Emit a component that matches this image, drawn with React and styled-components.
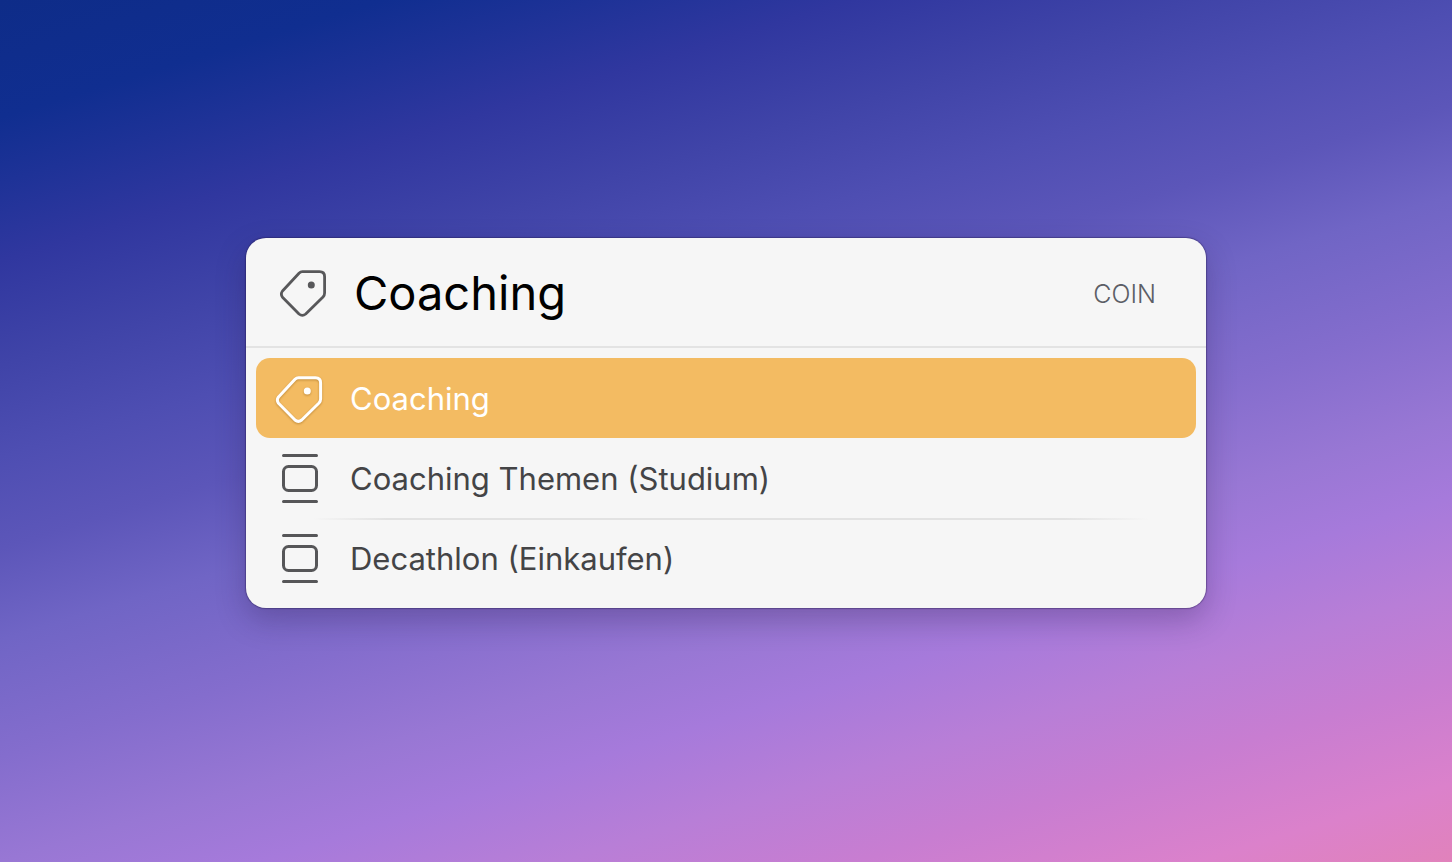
import React, { useState } from "react";
import styled, { createGlobalStyle } from "styled-components";

const GlobalStyle = createGlobalStyle`
  *, *::before, *::after { box-sizing: border-box; }
  body { margin: 0; font-family: Inter, "Liberation Sans", sans-serif; }
`;

const Desktop = styled.main`
  min-height: 100vh;
  display: flex;
  align-items: center;
  justify-content: center;
  padding: 24px 24px 40px;
  background:
    linear-gradient(
      163deg,
      #0e2c88 0%,
      #102e90 9%,
      #1e3297 14%,
      #30379f 20%,
      #4044a8 28%,
      #4e4eb2 35%,
      #5c56b9 42%,
      #7065c5 49%,
      #846dcd 58%,
      #9877d4 66%,
      #a67adb 72%,
      #b87ed7 79%,
      #c87dd1 86%,
      #db81cb 94%,
      #e182bb 100%
    );
`;

const Palette = styled.section`
  width: 100%;
  max-width: 960px;
  background: #f6f6f6;
  border-radius: 20px;
  box-shadow: 0 0 1px 1px rgba(30, 20, 70, 0.36), 0 12px 30px rgba(40, 20, 70, 0.28);
`;

const SearchBar = styled.label`
  display: flex;
  align-items: center;
  gap: 24px;
  height: 110px;
  padding: 0 50px 0 32px;
  border-bottom: 2px solid #e3e3e3;
  color: #58585a;
`;

const SearchInput = styled.input`
  flex: 1;
  min-width: 0;
  padding: 2px 0 0;
  border: 0;
  outline: 0;
  background: transparent;
  color: #000;
  font: 400 47px/64px Inter, "Liberation Sans", sans-serif;
`;

const Shortcut = styled.span`
  padding-top: 3px;
  color: #5c5e66;
  font-size: 25px;
  line-height: 32px;
  font-weight: 300;
`;

const Results = styled.ul`
  margin: 0;
  padding: 10px;
  list-style: none;
`;

const Result = styled.li`
  background: ${(p) =>
    p.$divided
      ? "linear-gradient(90deg, transparent 6%, #e2e2e2 14%, #e2e2e2 86%, transparent 95%) top / 100% 2px no-repeat"
      : "none"};
`;

const ResultButton = styled.button`
  display: flex;
  align-items: center;
  gap: 24px;
  width: 100%;
  height: 80px;
  padding: 0 18px;
  border: 0;
  border-radius: 14px;
  background: ${(p) => (p.$selected ? "#f3bb62" : "transparent")};
  color: ${(p) => (p.$selected ? "#fff" : "#444446")};
  font: 400 31px/40px Inter, "Liberation Sans", sans-serif;
  text-align: left;
  cursor: pointer;

  svg {
    color: ${(p) => (p.$selected ? "#fff" : "#565658")};
    filter: ${(p) => (p.$selected ? "drop-shadow(0 1px 1px rgba(120, 70, 0, 0.4))" : "none")};
  }
`;

const ResultLabel = styled.span`
  padding-top: 2px;
`;

const Icon = styled.svg`
  flex: none;
  display: block;
  width: 52px;
  height: 52px;
  fill: none;
  stroke: currentColor;
  stroke-linecap: round;
  stroke-linejoin: round;
`;

function TagIcon({ weight }) {
  return (
    <Icon viewBox="0 0 52 52" strokeWidth={weight} aria-hidden="true">
      <path d="M24.500 5.700H41.500Q46.600 5.700 46.600 10.700V27Q46.600 29.300 45 31L27.700 48Q24.300 50.700 21 48L4.500 31.300Q2.200 28 4.500 25L21 7.200Q22.500 5.700 24.500 5.700Z" />
      <circle cx="33.300" cy="19" r="3.500" fill="currentColor" stroke="none" />
    </Icon>
  );
}

function AreaIcon() {
  return (
    <Icon viewBox="0 0 52 52" strokeWidth="3" aria-hidden="true">
      <path d="M9.500 3.500h33M9.500 49.500h33" />
      <rect x="9.500" y="14.500" width="33" height="24" rx="5" />
    </Icon>
  );
}

const results = [
  { label: "Coaching", kind: "tag" },
  { label: "Coaching Themen (Studium)", kind: "area" },
  { label: "Decathlon (Einkaufen)", kind: "area" },
];

export default function App() {
  const [query, setQuery] = useState("Coaching");
  const [selected, setSelected] = useState(0);

  return (
    <>
      <GlobalStyle />
      <Desktop>
        <Palette>
          <SearchBar>
            <TagIcon weight={2.8} />
            <SearchInput
              type="text"
              aria-label="Tag"
              spellCheck={false}
              value={query}
              onChange={(e) => setQuery(e.target.value)}
            />
            <Shortcut>COIN</Shortcut>
          </SearchBar>
          <Results>
            {results.map((item, i) => (
              <Result key={item.label} $divided={i > 0 && i !== selected && i - 1 !== selected}>
                <ResultButton type="button" $selected={i === selected} onClick={() => setSelected(i)}>
                  {item.kind === "tag" ? <TagIcon weight={3} /> : <AreaIcon />}
                  <ResultLabel>{item.label}</ResultLabel>
                </ResultButton>
              </Result>
            ))}
          </Results>
        </Palette>
      </Desktop>
    </>
  );
}
